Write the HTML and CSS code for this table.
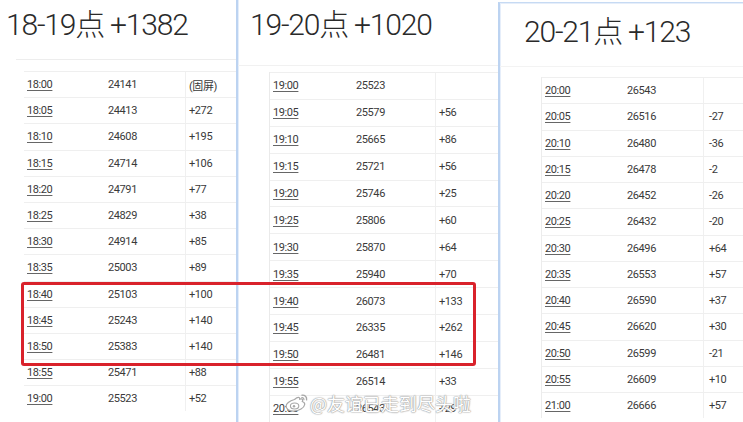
FILE: index.html
```html
<!DOCTYPE html>
<html lang="zh">
<head>
<meta charset="utf-8">
<title>点赞统计</title>
<link rel="stylesheet" href="styles.css">
</head>
<body>
<div class="collage">
  <section class="panel p1">
    <h1 class="title">18-19点 +1382</h1>
    <div class="rule"></div>
    <div class="tbl">
      <div class="row"><span class="t">18:00</span><span class="n">24141</span><span class="d">(固屏)</span></div>
      <div class="row"><span class="t">18:05</span><span class="n">24413</span><span class="d">+272</span></div>
      <div class="row"><span class="t">18:10</span><span class="n">24608</span><span class="d">+195</span></div>
      <div class="row"><span class="t">18:15</span><span class="n">24714</span><span class="d">+106</span></div>
      <div class="row"><span class="t">18:20</span><span class="n">24791</span><span class="d">+77</span></div>
      <div class="row"><span class="t">18:25</span><span class="n">24829</span><span class="d">+38</span></div>
      <div class="row"><span class="t">18:30</span><span class="n">24914</span><span class="d">+85</span></div>
      <div class="row"><span class="t">18:35</span><span class="n">25003</span><span class="d">+89</span></div>
      <div class="row"><span class="t">18:40</span><span class="n">25103</span><span class="d">+100</span></div>
      <div class="row"><span class="t">18:45</span><span class="n">25243</span><span class="d">+140</span></div>
      <div class="row"><span class="t">18:50</span><span class="n">25383</span><span class="d">+140</span></div>
      <div class="row"><span class="t">18:55</span><span class="n">25471</span><span class="d">+88</span></div>
      <div class="row"><span class="t">19:00</span><span class="n">25523</span><span class="d">+52</span></div>
    </div>
  </section>
  <section class="panel p2">
    <h1 class="title">19-20点 +1020</h1>
    <div class="rule"></div>
    <div class="tbl">
      <div class="row"><span class="t">19:00</span><span class="n">25523</span><span class="d"></span></div>
      <div class="row"><span class="t">19:05</span><span class="n">25579</span><span class="d">+56</span></div>
      <div class="row"><span class="t">19:10</span><span class="n">25665</span><span class="d">+86</span></div>
      <div class="row"><span class="t">19:15</span><span class="n">25721</span><span class="d">+56</span></div>
      <div class="row"><span class="t">19:20</span><span class="n">25746</span><span class="d">+25</span></div>
      <div class="row"><span class="t">19:25</span><span class="n">25806</span><span class="d">+60</span></div>
      <div class="row"><span class="t">19:30</span><span class="n">25870</span><span class="d">+64</span></div>
      <div class="row"><span class="t">19:35</span><span class="n">25940</span><span class="d">+70</span></div>
      <div class="row"><span class="t">19:40</span><span class="n">26073</span><span class="d">+133</span></div>
      <div class="row"><span class="t">19:45</span><span class="n">26335</span><span class="d">+262</span></div>
      <div class="row"><span class="t">19:50</span><span class="n">26481</span><span class="d">+146</span></div>
      <div class="row"><span class="t">19:55</span><span class="n">26514</span><span class="d">+33</span></div>
      <div class="row"><span class="t">20:00</span><span class="n">26543</span><span class="d">+29</span></div>
    </div>
  </section>
  <section class="panel p3">
    <h1 class="title">20-21点 +123</h1>
    <div class="rule"></div>
    <div class="tbl">
      <div class="row"><span class="t">20:00</span><span class="n">26543</span><span class="d"></span></div>
      <div class="row"><span class="t">20:05</span><span class="n">26516</span><span class="d">-27</span></div>
      <div class="row"><span class="t">20:10</span><span class="n">26480</span><span class="d">-36</span></div>
      <div class="row"><span class="t">20:15</span><span class="n">26478</span><span class="d">-2</span></div>
      <div class="row"><span class="t">20:20</span><span class="n">26452</span><span class="d">-26</span></div>
      <div class="row"><span class="t">20:25</span><span class="n">26432</span><span class="d">-20</span></div>
      <div class="row"><span class="t">20:30</span><span class="n">26496</span><span class="d">+64</span></div>
      <div class="row"><span class="t">20:35</span><span class="n">26553</span><span class="d">+57</span></div>
      <div class="row"><span class="t">20:40</span><span class="n">26590</span><span class="d">+37</span></div>
      <div class="row"><span class="t">20:45</span><span class="n">26620</span><span class="d">+30</span></div>
      <div class="row"><span class="t">20:50</span><span class="n">26599</span><span class="d">-21</span></div>
      <div class="row"><span class="t">20:55</span><span class="n">26609</span><span class="d">+10</span></div>
      <div class="row"><span class="t">21:00</span><span class="n">26666</span><span class="d">+57</span></div>
    </div>
  </section>
  <div class="highlight"></div>
  <div class="watermark">
    <svg class="wb" width="24" height="20" viewBox="0 0 24 20">
      <path d="M9.5 6.5c3-2.6 5.6-2.9 5.2-0.2 2.4-1 3.8 0.2 2.6 2.2 1.8 0.6 2.6 1.6 2.4 3-0.5 3.4-5.6 6.6-11 6.6-4.6 0-7.6-2.2-7.6-5 0-2.2 3-5.2 8.4-6.6z" fill="#fff" stroke="#a8a8a8" stroke-width="1.2"/>
      <ellipse cx="9.6" cy="13" rx="4.2" ry="3" fill="#fff" stroke="#a8a8a8" stroke-width="1.1"/>
      <circle cx="9" cy="13.3" r="1.2" fill="#a8a8a8"/>
      <path d="M17 2.2c2.8-0.4 5 1.8 4.6 4.6" fill="none" stroke="#a8a8a8" stroke-width="1.4" stroke-linecap="round"/>
      <path d="M16.8 4.6c1.3-0.2 2.3 0.8 2.1 2.1" fill="none" stroke="#a8a8a8" stroke-width="1.2" stroke-linecap="round"/>
    </svg>
    <span class="wm-text">@友谊已走到尽头啦</span>
  </div>
</div>
</body>
</html>
```

FILE: styles.css
```css
html, body {
  margin: 0;
  padding: 0;
  background: #fff;
}
body {
  width: 743px;
  height: 422px;
  overflow: hidden;
  font-family: Roboto, "Noto Sans CJK SC", sans-serif;
  color: #333;
}
.collage {
  position: relative;
  display: flex;
  width: 743px;
  height: 422px;
}
.panel {
  flex: none;
  box-sizing: border-box;
  height: 422px;
  overflow: hidden;
  background: #fff;
}
.p1 {
  width: 236px;
}
.p2 {
  width: 262px;
  border-left: 2px solid #bcd3f1;
  box-shadow: inset 1px 0 0 #e3edfa;
}
.p3 {
  flex: 1;
  margin-top: 2px;
  border-left: 2px solid #bcd3f1;
  border-top: 1px solid #c6daf3;
  box-shadow: inset 1px 1px 0 #e6eefa;
}
.title {
  margin: 0;
  font-size: 30px;
  line-height: 36px;
  font-weight: 300;
  letter-spacing: -1.2px;
  color: #2a2a2a;
  white-space: nowrap;
}
.rule {
  height: 1px;
  background: #ededed;
}
.tbl {
  font-size: 11px;
  letter-spacing: -0.4px;
  color: #3a3a3a;
}
.row {
  display: grid;
  align-items: center;
  box-sizing: border-box;
  border-top: 1px solid #efefef;
}
.row span {
  display: flex;
  align-items: center;
  height: 100%;
}
.row .t {
  text-decoration: underline;
  text-decoration-color: #666;
  text-underline-offset: 2px;
}
.row .d {
  border-left: 1px solid #f0f0f0;
}

/* panel 1 */
.p1 .title { padding: 7px 0 0 6px; }
.p1 .rule { margin: 16px 0 0 16px; }
.p1 .tbl { margin: 11px 0 0 24px; }
.p1 .row { grid-template-columns: 84px 77px 1fr; height: 26.2px; }
.p1 .row .t { padding-left: 3px; }
.p1 .row .d { padding-left: 3px; }

/* panel 2 */
.p2 .title { padding: 7px 0 0 12px; }
.p2 .rule { margin: 22px 0 0 0; background: #f1f1f1; }
.p2 .tbl { margin: 6px 0 0 31px; border-left: 1px solid #eaeaea; }
.p2 .row { grid-template-columns: 86px 79px 1fr; height: 26.9px; }
.p2 .row .t { padding-left: 3px; }
.p2 .row .d { padding-left: 3px; }

/* panel 3 */
.p3 .title { padding: 11px 0 0 24px; }
.p3 .rule { margin: 16px 0 0 0; background: #f3f3f3; }
.p3 .tbl { margin: 10px 0 0 41px; border-left: 1px solid #ececec; }
.p3 .row { grid-template-columns: 85px 76px 1fr; height: 26.25px; }
.p3 .row .t { padding-left: 3px; }
.p3 .row .d { padding-left: 5px; }

/* annotation overlay */
.highlight {
  position: absolute;
  left: 21px;
  top: 282px;
  width: 455px;
  height: 84px;
  box-sizing: border-box;
  border: 3px solid #d9222b;
  border-radius: 3px;
}
.watermark {
  position: absolute;
  left: 285px;
  top: 391px;
  display: flex;
  align-items: center;
  gap: 1px;
}
.wm-text {
  font-family: "Noto Sans CJK SC", sans-serif;
  font-size: 18px;
  line-height: 24px;
  color: #fff;
  text-shadow: 0 0 1px #9a9a9a, 0 0 1px #9a9a9a, 0 0 2px #b0b0b0;
}
```
